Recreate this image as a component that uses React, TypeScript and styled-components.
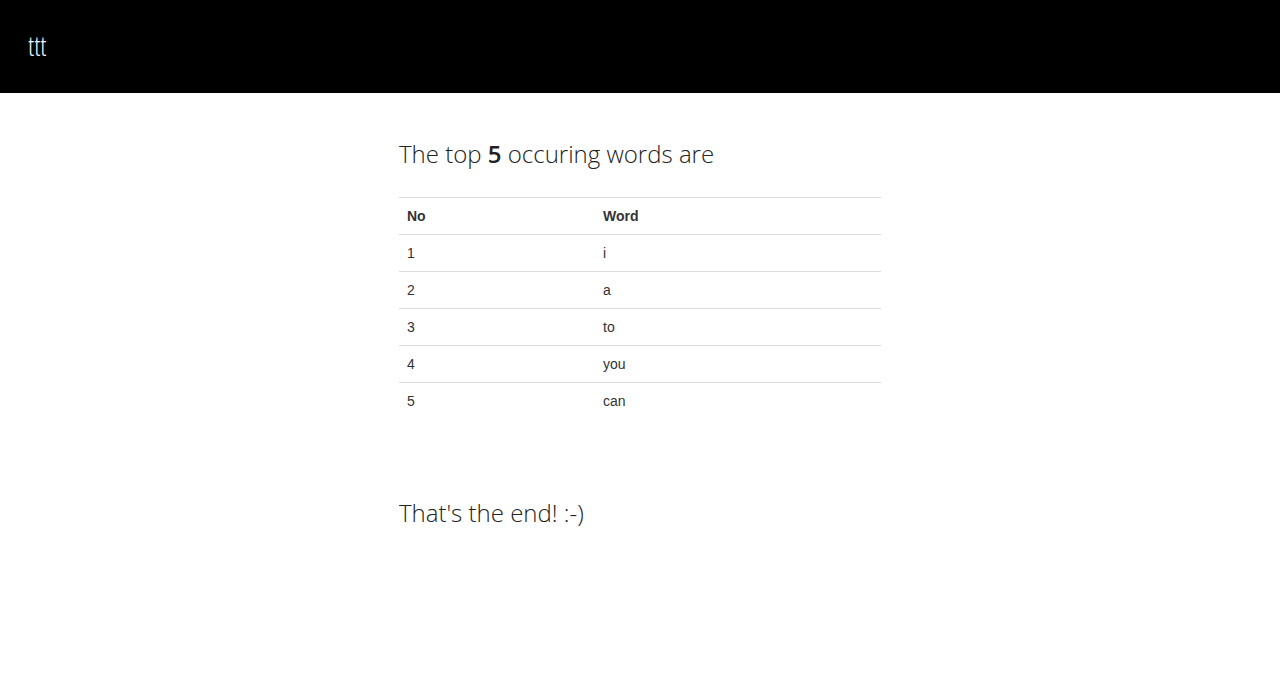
import React from "react";
import styled, { createGlobalStyle } from "styled-components";

const Global = createGlobalStyle`
  html, body { margin: 0; padding: 0; background: #fff; }
  body { font-family: "Liberation Sans", Arial, sans-serif; color: #333; font-size: 14px; line-height: 1.42857; }
  * { box-sizing: border-box; }
`;

const Header = styled.header`
  height: 93px;
  background: #000;
  display: flex;
  align-items: center;
  padding: 0 28px;
`;

const Brand = styled.div`
  font-family: "Open Sans", sans-serif;
  font-weight: 300;
  font-stretch: 75%;
  font-size: 27px;
  letter-spacing: 0;
  line-height: 1;
  color: #f2f8ff;
  margin-top: -3px;
`;

const Container = styled.main`
  width: 482px;
  margin: 0 auto;
`;

const Heading = styled.h3<{ $top: number; $bottom: number }>`
  font-family: "Open Sans", sans-serif;
  font-weight: 300;
  font-size: 24px;
  line-height: 30px;
  color: #222;
  margin: ${(p) => p.$top}px 0 ${(p) => p.$bottom}px;
  b { font-weight: 600; }
`;

const Table = styled.table`
  width: 100%;
  border-collapse: collapse;
  border-spacing: 0;
`;

const Cell = styled.td<{ $head?: boolean; $first?: boolean }>`
  padding: 8px;
  line-height: 20px;
  font-size: 14px;
  text-align: left;
  vertical-align: top;
  border-top: 1px solid #ddd;
  font-weight: ${(p) => (p.$head ? 700 : 400)};
  color: #333;
  width: ${(p) => (p.$first ? "196px" : "auto")};
`;

const words = ["i", "a", "to", "you", "can"];

export default function App() {
  return (
    <>
      <Global />
      <Header>
        <Brand>ttt</Brand>
      </Header>
      <Container>
        <Heading $top={46} $bottom={28}>
          The top <b>5</b> occuring words are
        </Heading>
        <Table>
          <thead>
            <tr>
              <Cell as="th" $head $first>No</Cell>
              <Cell as="th" $head>Word</Cell>
            </tr>
          </thead>
          <tbody>
            {words.map((w, i) => (
              <tr key={w}>
                <Cell $first>{i + 1}</Cell>
                <Cell>{w}</Cell>
              </tr>
            ))}
          </tbody>
        </Table>
        <Heading $top={79} $bottom={0}>That's the end! :-)</Heading>
      </Container>
    </>
  );
}
